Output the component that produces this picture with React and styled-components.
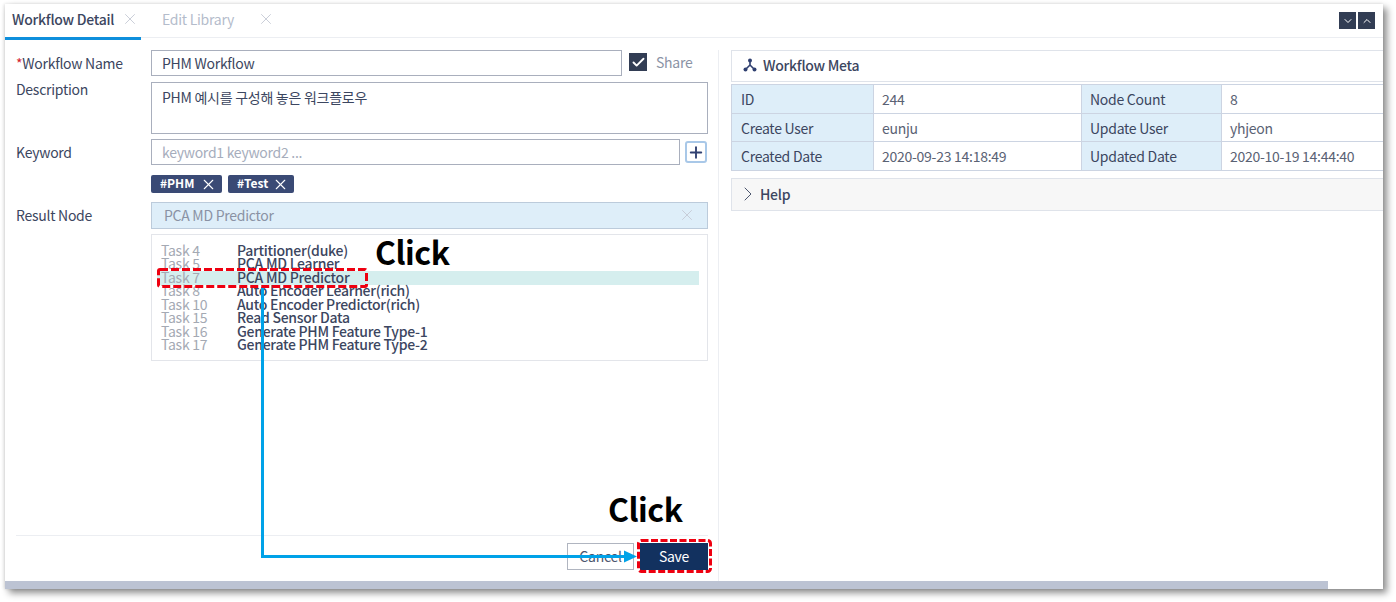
import React from 'react';
import styled, { createGlobalStyle } from 'styled-components';
import { X, Check, Plus, ChevronDown, ChevronUp, ChevronRight } from 'lucide-react';

const GlobalStyle = createGlobalStyle`
  html, body {
    margin: 0;
    padding: 0;
    background: #ffffff;
    overflow: hidden;
  }
  * {
    box-sizing: border-box;
  }
  body {
    font-family: "Noto Sans CJK KR", "Noto Sans", sans-serif;
    font-size: 14px;
    color: #3c4660;
    letter-spacing: -0.27px;
  }
`;

const Page = styled.div`
  position: relative;
  width: 1396px;
  height: 602px;
  padding: 4px 0 0 5px;
`;

const Frame = styled.div`
  width: 1378px;
  height: 585px;
  display: flex;
  flex-direction: column;
  background: #fff;
  box-shadow: 4px 4px 7px rgba(0, 0, 0, 0.45), -1px 0 3px rgba(0, 0, 0, 0.12);
`;

const TabBar = styled.div`
  height: 34px;
  flex: none;
  display: flex;
  align-items: stretch;
  border-bottom: 1px solid #eceef2;
`;

const Tab = styled.div`
  width: ${p => p.$width}px;
  height: ${p => (p.$active ? 36 : 33)}px;
  flex: none;
  display: flex;
  align-items: center;
  justify-content: space-between;
  padding: 0 ${p => p.$right}px 3px ${p => p.$left}px;
  font-weight: ${p => (p.$active ? 500 : 400)};
  color: ${p => (p.$active ? '#3c4660' : '#b4bccb')};
  border-bottom: ${p => (p.$active ? '3px solid #0f8fdc' : 'none')};
`;

const TabClose = styled(X)`
  color: #c5cad5;
`;

const TabTools = styled.div`
  margin-left: auto;
  display: flex;
  align-items: center;
  gap: 2px;
  padding: 0 8px 0 0;
`;

const ToolButton = styled.div`
  width: 17px;
  height: 17px;
  display: flex;
  align-items: center;
  justify-content: center;
  background: #323d54;
  color: #fff;
`;

const Content = styled.div`
  flex: 1;
  min-height: 0;
  display: flex;
  padding-top: 12px;
`;

const FormPanel = styled.div`
  width: 714px;
  flex: none;
  display: flex;
  flex-direction: column;
  padding: 0 10px 11px 11px;
  border-right: 1px solid #eceef2;
`;

const FormRow = styled.div`
  display: flex;
  align-items: flex-start;
  margin-bottom: ${p => p.$gap || 0}px;
`;

const Label = styled.div`
  width: 135px;
  flex: none;
  padding-top: 1px;
  line-height: ${p => p.$line || 25}px;
  white-space: nowrap;
  font-weight: 400;
`;

const Required = styled.span`
  color: #d3232f;
`;

const TextBox = styled.div`
  flex: ${p => (p.$width ? 'none' : 1)};
  width: ${p => (p.$width ? `${p.$width}px` : 'auto')};
  height: ${p => p.$height || 26}px;
  padding: 0 10px;
  line-height: ${p => (p.$height ? 28 : 24)}px;
  border: 1px solid #a9afbd;
  background: #fff;
  color: ${p => (p.$placeholder ? '#a6adbc' : '#3c4660')};
  white-space: nowrap;
`;

const ShareBox = styled.div`
  width: 18px;
  height: 18px;
  margin: 3px 9px 0 7px;
  flex: none;
  display: flex;
  align-items: center;
  justify-content: center;
  background: #323d54;
  color: #fff;
`;

const ShareLabel = styled.div`
  line-height: 24px;
  color: #8b93a5;
`;

const AddButton = styled.div`
  width: 22px;
  height: 22px;
  margin: 2px 1px 0 5px;
  flex: none;
  display: flex;
  align-items: center;
  justify-content: center;
  border: 2px solid #a9c8e8;
  border-radius: 3px;
  color: #2f3f70;
`;

const Chips = styled.div`
  display: flex;
  gap: 6px;
  padding-left: 135px;
  margin: 10px 0 9px;
`;

const Chip = styled.div`
  width: ${p => p.$width}px;
  height: 18px;
  display: flex;
  align-items: center;
  justify-content: space-between;
  padding: 0 5px 3px 9px;
  background: #3a4a75;
  border-radius: 2px;
  color: #fff;
  font-size: 12px;
  font-weight: 700;
  letter-spacing: 0;
`;

const ChipClose = styled(X)`
  margin-bottom: -3px;
`;

const SelectBox = styled.div`
  flex: 1;
  height: 27px;
  display: flex;
  align-items: center;
  justify-content: space-between;
  padding: 0 11px 2px 12px;
  background: #deeef9;
  border: 1px solid #bccbdb;
  color: #8a92a4;
`;

const TaskList = styled.div`
  height: 127px;
  margin: 5px 0 0 135px;
  padding: 9px 8px 0 5px;
  border: 1px solid #e3e5ea;
`;

const TaskRow = styled.div`
  height: 13.5px;
  display: flex;
  align-items: center;
  padding-bottom: 2px;
  background: ${p => (p.$selected ? '#d5eeee' : 'transparent')};
  white-space: nowrap;
`;

const TaskId = styled.div`
  width: 80px;
  padding-left: 4px;
  flex: none;
  color: #a4a9b3;
`;

const TaskName = styled.div`
  color: #3c4660;
  font-weight: 500;
`;

const FormFooter = styled.div`
  margin-top: auto;
  height: 35px;
  display: flex;
  justify-content: flex-end;
  align-items: flex-end;
  gap: 6px;
  border-top: 1px solid #eceef2;
`;

const Button = styled.div`
  width: ${p => p.$width}px;
  height: 27px;
  display: flex;
  align-items: center;
  justify-content: center;
  padding-bottom: 1px;
  border: 1px solid ${p => (p.$primary ? '#12315f' : '#b0b5c0')};
  background: ${p => (p.$primary ? '#12315f' : '#fff')};
  color: ${p => (p.$primary ? '#fff' : '#4c566e')};
`;

const MetaPanel = styled.div`
  flex: 1;
  min-width: 0;
  padding-left: 12px;
`;

const MetaTitle = styled.div`
  height: 32px;
  display: flex;
  align-items: center;
  gap: 6px;
  padding: 0 0 2px 11px;
  border: 1px solid #dfe3ea;
  border-right: none;
  font-weight: 500;
`;

const MetaGrid = styled.div`
  display: grid;
  grid-template-columns: 142px 207px 141px 1fr;
  grid-auto-rows: 28.7px;
  margin-top: 2px;
  border-top: 1px solid #ccd4e2;
  border-left: 1px solid #ccd4e2;
`;

const MetaCell = styled.div`
  display: flex;
  align-items: center;
  padding-left: 8px;
  background: ${p => (p.$label ? '#deeef9' : '#fff')};
  border-bottom: 1px solid #ccd4e2;
  border-right: ${p => (p.$label ? '1px solid #ccd4e2' : 'none')};
  color: ${p => (p.$label ? '#3c4660' : '#5a6274')};
  ${p => (p.$split ? 'border-left: 1px solid #ccd4e2;' : '')}

  &:nth-child(4n + 1) {
    padding-left: 9px;
  }
`;

const HelpBar = styled.div`
  height: 33px;
  margin-top: 7px;
  display: flex;
  align-items: center;
  padding: 0 0 2px 4px;
  background: #f7f7f7;
  border: 1px solid #dfe3ea;
  border-right: none;
  font-weight: 500;
`;

const ScrollTrack = styled.div`
  height: 8px;
  flex: none;
  padding-right: 55px;
`;

const ScrollThumb = styled.div`
  height: 100%;
  background: #bcc3d3;
`;

const ClickText = styled.div`
  position: absolute;
  left: ${p => p.$x}px;
  top: ${p => p.$y}px;
  font-size: 32px;
  line-height: 40px;
  font-weight: 700;
  color: #000;
  letter-spacing: -0.5px;
`;

const MarkLayer = styled.svg`
  position: absolute;
  left: 0;
  top: 0;
  pointer-events: none;
`;

const tasks = [
  ['Task 4', 'Partitioner(duke)'],
  ['Task 5', 'PCA MD Learner'],
  ['Task 7', 'PCA MD Predictor'],
  ['Task 8', 'Auto Encoder Learner(rich)'],
  ['Task 10', 'Auto Encoder Predictor(rich)'],
  ['Task 15', 'Read Sensor Data'],
  ['Task 16', 'Generate PHM Feature Type-1'],
  ['Task 17', 'Generate PHM Feature Type-2'],
];

const meta = [
  ['ID', '244', 'Node Count', '8'],
  ['Create User', 'eunju', 'Update User', 'yhjeon'],
  ['Created Date', '2020-09-23 14:18:49', 'Updated Date', '2020-10-19 14:44:40'],
];

const FlowIcon = () => (
  <svg width="14" height="14" viewBox="0 0 14 14" fill="none">
    <path d="M7 3v4M7 7l-4 4M7 7l4 4" stroke="#2f3f70" strokeWidth="1.6" />
    <circle cx="7" cy="2.5" r="2" fill="#2f3f70" />
    <circle cx="2.5" cy="11.5" r="2" fill="#2f3f70" />
    <circle cx="11.5" cy="11.5" r="2" fill="#2f3f70" />
  </svg>
);

const App = () => {
  return (
    <Page>
      <GlobalStyle />
      <Frame>
        <TabBar>
          <Tab $active $width={136} $left={7} $right={2}>
            Workflow Detail
            <TabClose size={18} strokeWidth={1.2} />
          </Tab>
          <Tab $width={135} $left={21} $right={1}>
            Edit Library
            <TabClose size={18} strokeWidth={1.2} />
          </Tab>
          <TabTools>
            <ToolButton><ChevronDown size={12} strokeWidth={2} /></ToolButton>
            <ToolButton><ChevronUp size={12} strokeWidth={2} /></ToolButton>
          </TabTools>
        </TabBar>
        <Content>
          <FormPanel>
            <FormRow $gap={6}>
              <Label><Required>*</Required>Workflow Name</Label>
              <TextBox $width={471}>PHM Workflow</TextBox>
              <ShareBox><Check size={15} strokeWidth={3} /></ShareBox>
              <ShareLabel>Share</ShareLabel>
            </FormRow>
            <FormRow $gap={5}>
              <Label $line={13}>Description</Label>
              <TextBox $height={52}>PHM 예시를 구성해 놓은 워크플로우</TextBox>
            </FormRow>
            <FormRow>
              <Label>Keyword</Label>
              <TextBox $placeholder>keyword1 keyword2 ...</TextBox>
              <AddButton><Plus size={19} strokeWidth={2.5} /></AddButton>
            </FormRow>
            <Chips>
              <Chip $width={71}>#PHM <ChipClose size={17} strokeWidth={1.5} /></Chip>
              <Chip $width={66}>#Test <ChipClose size={17} strokeWidth={1.5} /></Chip>
            </Chips>
            <FormRow>
              <Label>Result Node</Label>
              <SelectBox>
                PCA MD Predictor
                <X size={18} strokeWidth={1.2} color="#c5cad5" />
              </SelectBox>
            </FormRow>
            <TaskList>
              {tasks.map(([id, name]) => (
                <TaskRow key={id} $selected={id === 'Task 7'}>
                  <TaskId>{id}</TaskId>
                  <TaskName>{name}</TaskName>
                </TaskRow>
              ))}
            </TaskList>
            <FormFooter>
              <Button $width={67}>Cancel</Button>
              <Button $primary $width={68}>Save</Button>
            </FormFooter>
          </FormPanel>
          <MetaPanel>
            <MetaTitle>
              <FlowIcon />
              Workflow Meta
            </MetaTitle>
            <MetaGrid>
              {meta.map(row => (
                <React.Fragment key={row[0]}>
                  <MetaCell $label>{row[0]}</MetaCell>
                  <MetaCell>{row[1]}</MetaCell>
                  <MetaCell $label $split>{row[2]}</MetaCell>
                  <MetaCell>{row[3]}</MetaCell>
                </React.Fragment>
              ))}
            </MetaGrid>
            <HelpBar>
              <ChevronRight size={24} strokeWidth={1} color="#4c566e" />
              Help
            </HelpBar>
          </MetaPanel>
        </Content>
        <ScrollTrack><ScrollThumb /></ScrollTrack>
      </Frame>

      <MarkLayer width="1396" height="602">
        <path d="M262.5 287V556.5H626" stroke="#00a2e8" strokeWidth="3" fill="none" />
        <path d="M624 550.5L637 556.5L624 562.5Z" fill="#00a2e8" />
        <rect x="158.5" y="269.5" width="208" height="17" rx="1.5" fill="none" stroke="#ee0010" strokeWidth="3" strokeDasharray="8 3" />
        <rect x="638.5" y="540.5" width="72" height="31" rx="3" fill="none" stroke="#ee0010" strokeWidth="3" strokeDasharray="7 2.5" />
      </MarkLayer>
      <ClickText $x={375} $y={231}>Click</ClickText>
      <ClickText $x={608} $y={488}>Click</ClickText>
    </Page>
  );
};

export default App;
